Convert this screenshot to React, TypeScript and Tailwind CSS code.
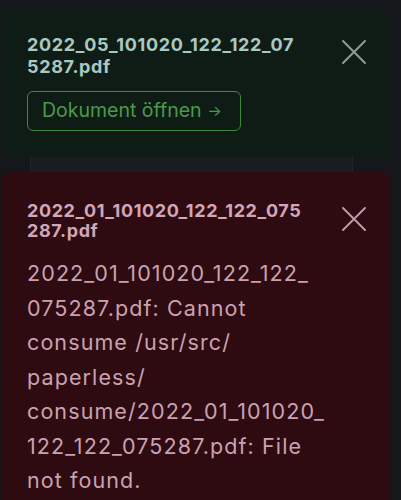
function CloseButton({ className }: { className: string }) {
  return (
    <button type="button" aria-label="Schließen" className={"shrink-0 " + className}>
      <svg width="24" height="24" viewBox="0 0 24 24" fill="none" stroke="currentColor" strokeWidth="2" strokeLinecap="round">
        <path d="M1 1l22 22M23 1L1 23" />
      </svg>
    </button>
  );
}

export default function App() {
  return (
    <div
      className="h-[500px] overflow-hidden bg-[#15171a] pt-[9px] pl-[2px] pr-[12px]"
      style={{ fontFamily: "Inter, 'Noto Sans', sans-serif" }}
    >
      {/* success toast */}
      <div className="rounded-[7px] bg-[#0f1c16] pl-[25px] pr-[23px] pt-[25px] pb-[26px]">
        <div className="flex items-start justify-between">
          <p className="text-[18px] font-bold leading-[22px] tracking-[0.65px] text-[#a9c9c0]">
            2022_05_101020_122_122_07
            <br />
            5287.pdf
          </p>
          <div className="pt-[6px]">
            <CloseButton className="text-[#8c9b95]" />
          </div>
        </div>
        <button
          type="button"
          className="mt-[13px] flex h-[40px] items-center rounded-[6px] border-[1.5px] border-[#3c8a3c] pl-[14px] pr-[18px] text-[19.5px] text-[#4b9a4b]"
        >
          Dokument öffnen<span className="ml-[6px] text-[15px]">→</span>
        </button>
      </div>

      {/* whatever sits behind the toasts */}
      <div className="ml-[28px] mr-[36px] h-[15px] border-x border-[#222428] bg-[#1a1c20]" />

      {/* error toast */}
      <div className="rounded-t-[7px] bg-[#2d0b11] pl-[25px] pr-[23px] pt-[29px] pb-[30px]">
        <div className="flex items-start justify-between">
          <p className="text-[18px] font-bold leading-[20px] tracking-[0.6px] text-[#d2a5b7]">
            2022_01_101020_122_122_075
            <br />
            287.pdf
          </p>
          <div className="pt-[6px]">
            <CloseButton className="text-[#b99ba6]" />
          </div>
        </div>
        <p className="mt-[15px] text-[21.5px] leading-[34.5px] tracking-[1.1px] text-[#cba1b2]">
          2022_01_101020_122_122_
          <br />
          075287.pdf: Cannot
          <br />
          consume /usr/src/
          <br />
          paperless/
          <br />
          consume/2022_01_101020_
          <br />
          122_122_075287.pdf: File
          <br />
          not found.
        </p>
      </div>
    </div>
  );
}
